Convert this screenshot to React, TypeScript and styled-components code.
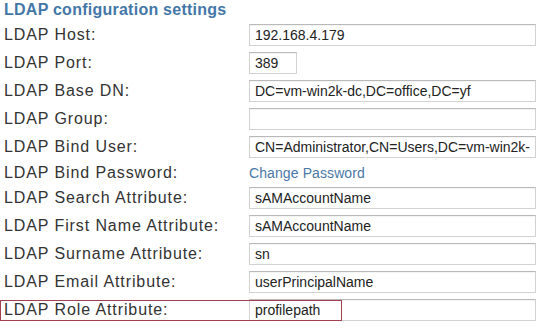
import styled, { createGlobalStyle } from "styled-components";

const GlobalStyle = createGlobalStyle`
  body {
    margin: 0;
    background: #ffffff;
    font-family: "Liberation Sans", Arial, sans-serif;
  }
`;

type Field = {
  label: string;
  value?: string;
  narrow?: boolean;
  link?: string;
};

const fields: Field[] = [
  { label: "LDAP Host:", value: "192.168.4.179" },
  { label: "LDAP Port:", value: "389", narrow: true },
  { label: "LDAP Base DN:", value: "DC=vm-win2k-dc,DC=office,DC=yf" },
  { label: "LDAP Group:", value: "" },
  { label: "LDAP Bind User:", value: "CN=Administrator,CN=Users,DC=vm-win2k-dc,DC=office,DC=yf" },
  { label: "LDAP Bind Password:", link: "Change Password" },
  { label: "LDAP Search Attribute:", value: "sAMAccountName" },
  { label: "LDAP First Name Attribute:", value: "sAMAccountName" },
  { label: "LDAP Surname Attribute:", value: "sn" },
  { label: "LDAP Email Attribute:", value: "userPrincipalName" },
];

export default function App() {
  return (
    <>
      <GlobalStyle />
      <Panel>
        <Title>LDAP configuration settings</Title>
        {fields.map((f) => (
          <Row key={f.label} $short={!!f.link}>
            <Label>{f.label}</Label>
            {f.link ? (
              <LinkText href="#">{f.link}</LinkText>
            ) : (
              <TextInput defaultValue={f.value} $narrow={f.narrow} readOnly />
            )}
          </Row>
        ))}
        <Row>
          <Label>LDAP Role Attribute:</Label>
          <TextInput defaultValue="profilepath" readOnly />
          <Highlight />
        </Row>
      </Panel>
    </>
  );
}

const Panel = styled.div`
  width: 546px;
  padding: 0 0 0 4px;
  box-sizing: border-box;
`;

const Title = styled.div`
  height: 21px;
  line-height: 19px;
  font-size: 16px;
  letter-spacing: 0.25px;
  font-weight: bold;
  color: #4477a8;
`;

const Row = styled.div<{ $short?: boolean }>`
  position: relative;
  display: flex;
  align-items: center;
  height: ${(p) => (p.$short ? "23px" : "28px")};
`;

const Label = styled.div`
  width: 245px;
  flex-shrink: 0;
  font-size: 16px;
  letter-spacing: 0.9px;
  color: #333333;
`;

const TextInput = styled.input<{ $narrow?: boolean }>`
  box-sizing: border-box;
  width: ${(p) => (p.$narrow ? "48px" : "287px")};
  height: 22px;
  padding: 0 5px;
  border: 1px solid #d2d2d2;
  border-top-color: #b9b9b9;
  box-shadow: inset 0 1px 1px rgba(0, 0, 0, 0.05);
  font-family: "Liberation Sans", Arial, sans-serif;
  font-size: 14px;
  color: #222222;
  background: #ffffff;
  outline: none;
`;

const LinkText = styled.a`
  font-size: 14px;
  letter-spacing: 0.1px;
  color: #4a78a8;
  text-decoration: none;
`;

const Highlight = styled.div`
  position: absolute;
  left: -4px;
  top: 4px;
  width: 340px;
  height: 19px;
  border: 1px solid #a3404f;
  pointer-events: none;
`;
